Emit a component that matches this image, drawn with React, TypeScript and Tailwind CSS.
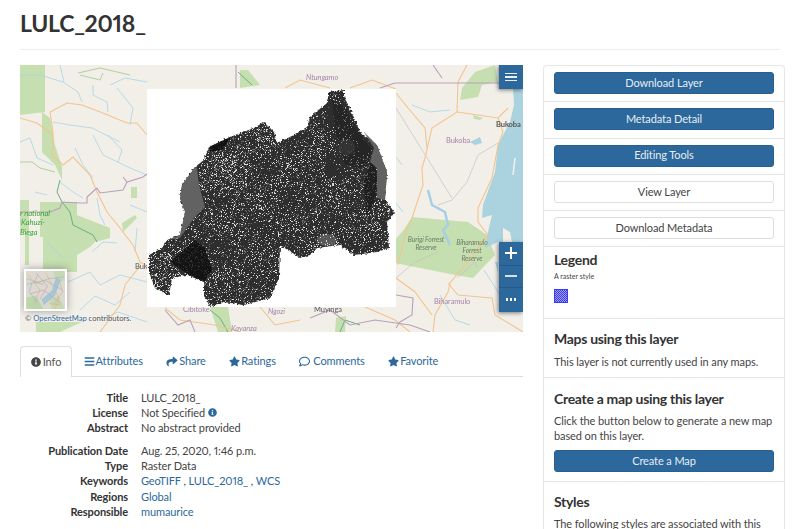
import { FaBars, FaInfoCircle, FaRegComment, FaShare, FaStar } from "react-icons/fa";

const outline =
  "344,90 329,92 327,103 310,117 307,127 294,135 277,143 274,132 264,122 254,128 230,137 209,147 204,160 195,167 182,185 180,198 185,212 180,235 167,240 162,248 149,255 149,272 155,288 169,295 172,278 187,275 204,282 204,295 210,307 224,302 244,305 270,298 279,278 280,245 300,258 310,255 317,248 340,245 354,255 377,252 389,248 387,222 395,213 385,200 387,172 377,145 360,132 350,108 344,97";

const land =
  "344,90 329,92 327,103 310,117 307,127 294,135 277,143 274,132 264,122 254,128 230,137 209,147 204,160 197,168 199,185 205,207 194,218 180,238 167,240 162,248 149,255 149,272 155,288 169,295 172,278 187,275 204,282 204,295 210,307 224,302 244,305 270,298 279,278 280,245 300,258 310,255 317,248 340,245 354,255 377,252 389,248 387,222 395,213 385,200 377,198 377,168 370,162 374,148 364,132 360,132 350,108 344,97";

// small deterministic generator so the speckle stays the same between runs
function buildSpeckle() {
  let seed = 20200825;
  const rand = () => {
    seed = (seed * 1664525 + 1013904223) >>> 0;
    return seed / 4294967296;
  };
  let light = "";
  let mid = "";
  for (let x = 147; x < 396; x++) {
    for (let y = 89; y < 307; y++) {
      let density = 0.2 + 0.07 * Math.sin(x / 11) * Math.cos(y / 9);
      if (Math.hypot(x - 225, y - 170) < 28) density += 0.1;
      if (Math.hypot(x - 160, y - 265) < 14) density += 0.1;
      if (x > 325 && y < 175) density -= 0.1;
      const r = rand();
      if (r < density * 0.4) light += `M${x} ${y}h1v1h-1z`;
      else if (r < density) mid += `M${x} ${y}h1v1h-1z`;
    }
  }
  return { light, mid };
}

const speckle = buildSpeckle();

const rivers = [
  "M20 75 L40 75 L63 82 L78 92 L82 102",
  "M93 85 L93 95 L107 102 L108 112",
  "M117 88 L133 108 L130 125",
  "M53 122 L70 125 L92 128 L120 142",
  "M93 135 L103 155 L130 168 L147 175",
  "M20 142 L30 138 L37 158 L53 165",
  "M75 148 L83 165 L93 178",
  "M60 182 L73 192 L83 198",
  "M97 198 L100 215 L105 225",
  "M35 192 L47 195",
  "M130 205 L147 212",
  "M137 228 L135 252",
  "M47 242 L63 258",
  "M92 252 L103 242 L117 243",
  "M110 85 L125 78 L147 82",
  "M60 65 L64 82",
  "M108 135 L122 150 L118 162",
  "M68 282 L90 272 L100 285 L120 275 L147 282",
  "M80 310 L95 296 L115 305 L130 292",
  "M100 320 L118 312 L147 322",
  "M396 157 L402 165",
  "M396 203 L403 212",
  "M412 105 L430 112 L450 110",
  "M484 270 L500 295 L510 300",
  "M440 295 L455 320 L470 325",
  "M508 268 L523 272",
];

const paleGreenLines = [
  "M78 73 L100 68 L130 75",
  "M80 75 L100 80 L103 73",
  "M20 162 L32 162 L40 168 L55 172",
];

const greenLines = [
  "M60 180 L57 192 L62 202 L70 212 L73 225 L93 235 L97 242",
  "M210 310 L220 318 L228 332",
  "M340 332 L345 320 L360 325",
  "M238 72 L252 85",
];

const roads = [
  "M50 112 L67 103 L82 105 L103 113 L127 123 L137 123 L147 135",
  "M50 112 L53 132 L53 148 L52 155 L63 165 L73 157 L90 175 L97 192 L107 212 L120 228 L133 245 L140 262 L147 266",
  "M20 118 L37 123 L53 135",
  "M140 266 L125 285 L120 305 L100 332",
  "M467 65 L458 82 L457 112 L432 128 L425 158 L422 168 L423 185 L412 218 L405 235 L398 265",
  "M396 93 L408 108 L425 128 L427 148",
  "M457 112 L478 115 L498 118 L508 108",
  "M498 118 L503 132 L498 145 L492 178 L478 208 L478 222 L488 235 L465 265 L450 283 L448 292 L435 315 L433 332",
  "M448 283 L458 295 L492 298 L495 315 L523 332",
  "M396 278 L415 292 L432 315",
  "M285 88 L300 80 L330 88",
  "M350 88 L372 80 L396 89",
  "M165 308 L180 320 L215 325 L240 332",
  "M260 307 L275 325 L300 320",
  "M365 307 L395 320 L410 332",
];

const greyLines = [
  "M396 108 L452 198",
  "M438 205 L452 200 L467 182 L478 155 L498 143",
  "M396 278 L415 262 L438 252",
  "M457 278 L475 262 L477 268",
];

const borders = [
  "M380 88 L395 83 L499 83",
  "M433 65 L442 78",
  "M236 65 L236 88",
  "M123 177 L127 182 L143 177 L147 174",
  "M97 188 L100 193 L123 190 L127 182",
  "M97 188 L87 197 L87 203 L80 203 L62 202 L60 208 L50 212 L20 212",
  "M165 310 L178 325 L190 320 L195 332",
  "M310 318 L330 310 L350 325 L375 320 L410 325 L430 332",
  "M396 295 L413 298 L412 315 L400 322 L396 328",
];

function MapBackground() {
  return (
    <svg viewBox="20 65 503 267" className="absolute inset-0 h-full w-full blur-[0.35px]">
      <rect x="20" y="65" width="503" height="267" fill="#f2efe9" />
      <g fill="#c5dfb0">
        <polygon points="20,65 45,65 45,112 20,115" />
        <polygon points="42,112 50,118 55,145 62,167 62,180 55,165 42,152" />
        <polygon points="20,200 29,200 29,265 25,265 25,232 20,232" />
        <polygon points="40,202 77,202 77,215 110,228 110,238 95,242 90,247 77,255 77,272 43,272 43,237 40,237" />
        <polygon points="122,223 135,215 137,218 123,232" />
        <polygon points="131,187 137,187 137,198 131,198" />
        <polygon points="412,217 468,222 487,235 495,255 473,278 455,275 395,263 395,240 405,228" />
        <polygon points="462,88 475,72 495,65 498,82 482,85 478,97 460,100" />
        <polygon points="473,115 483,118 480,120 474,119" />
        <polygon points="240,70 248,70 260,85 240,88" />
        <polygon points="36,322 82,322 60,332 36,332" />
        <polygon points="210,307 228,307 232,332 218,332" />
        <polygon points="336,318 346,316 345,332 335,332" />
      </g>
      <polygon
        points="513,88 514,105 510,122 502,137 498,145 495,172 483,205 482,218 492,215 488,232 485,248 498,242 523,242 523,88"
        fill="#aad3df"
      />
      <polygon points="503,228 510,232 512,242 503,242" fill="#f2efe9" />
      <path d="M515 158 L513 175" stroke="#f2efe9" strokeWidth="1.5" />
      <polygon points="470,142 480,137 482,143 475,145" fill="#aad3df" />
      <polygon points="495,262 498,262 498,272" fill="#aad3df" />
      <path d="M428 190 L432 205 L445 212 L448 225 L443 230 L450 245" fill="none" stroke="#a6cfe3" strokeWidth="2.5" />
      <g fill="none">
        {rivers.map((d) => (
          <path key={d} d={d} stroke="#a8d3e6" strokeWidth="0.8" />
        ))}
        {greyLines.map((d) => (
          <path key={d} d={d} stroke="#c8bebe" strokeWidth="0.7" />
        ))}
        {paleGreenLines.map((d) => (
          <path key={d} d={d} stroke="#a8cc98" strokeWidth="0.9" />
        ))}
        {greenLines.map((d) => (
          <path key={d} d={d} stroke="#6fae80" strokeWidth="1" />
        ))}
        {roads.map((d) => (
          <path key={d} d={d} stroke="#f4c48e" strokeWidth="1.1" />
        ))}
        {borders.map((d) => (
          <path key={d} d={d} stroke="#b9a0ba" strokeWidth="1.1" />
        ))}
      </g>
      <g fontFamily="Lato, sans-serif" fontSize="7.5">
        <text x="306" y="80" fill="#a687a8" fontStyle="italic">Ntungamo</text>
        <text x="496" y="127" fill="#555555" fontWeight="700">Bukoba</text>
        <text x="446" y="143" fill="#a884a8">Bukoba</text>
        <g fill="#6e7d66" fontStyle="italic" fontSize="6.8" textAnchor="middle">
          <text x="426" y="242">Burigi Forrest</text>
          <text x="426" y="250">Reserve</text>
          <text x="472" y="245">Biharamulo</text>
          <text x="472" y="253">Forrest</text>
          <text x="472" y="261">Reserve</text>
        </g>
        <g fill="#3fa33a" fontStyle="italic" fontSize="7.8">
          <text x="20" y="216">r national</text>
          <text x="21" y="225">Kahuzi-</text>
          <text x="20" y="235">Biega</text>
        </g>
        <text x="135" y="269" fill="#555555">Buk</text>
        <text x="434" y="304" fill="#a884a8">Biharamulo</text>
        <text x="183" y="312" fill="#a687a8">Cibitoke</text>
        <text x="268" y="314" fill="#a687a8" fontStyle="italic">Ngozi</text>
        <text x="314" y="312" fill="#555555">Muyinga</text>
        <text x="231" y="331" fill="#a687a8" fontStyle="italic">Kayanza</text>
      </g>
    </svg>
  );
}

function RasterOverlay() {
  return (
    <svg
      viewBox="147 89 249 218"
      className="absolute left-[127px] top-[24px] h-[218px] w-[249px] bg-white blur-[0.4px]"
    >
      <defs>
        <filter id="rough" x="-5%" y="-5%" width="110%" height="110%">
          <feTurbulence type="fractalNoise" baseFrequency="0.45" numOctaves="2" seed="3" result="t" />
          <feDisplacementMap in="SourceGraphic" in2="t" scale="4" xChannelSelector="R" yChannelSelector="G" />
        </filter>
        <clipPath id="land">
          <polygon points={land} />
        </clipPath>
      </defs>
      <polygon points={outline} fill="#2d2d2d" filter="url(#rough)" />
      <polygon points="195,167 182,185 180,198 185,212 180,235 167,240 180,238 194,218 205,207 199,185 197,168" fill="#626262" />
      <polygon points="364,132 377,145 387,172 385,200 377,198 377,168 370,162 374,148" fill="#626262" />
      <ellipse cx="347" cy="147" rx="8" ry="8" fill="#454545" />
      <ellipse cx="327" cy="240" rx="10" ry="6" fill="#585858" />
      <g clipPath="url(#land)">
        <path d={speckle.mid} fill="#6e6e6e" />
        <path d={speckle.light} fill="#d8d8d8" />
        <polygon points="170,262 195,240 205,248 212,270 204,282 185,272" fill="#0c0c0c" opacity="0.8" />
        <polygon points="209,147 224,138 232,136 222,150 210,152" fill="#0c0c0c" opacity="0.85" />
        <polygon points="372,160 378,175 375,200 366,215 364,180" fill="#161616" opacity="0.6" />
        <polygon points="332,100 346,108 355,128 372,150 366,170 345,165 335,130" fill="#1a1a1a" opacity="0.4" />
      </g>
    </svg>
  );
}

function Thumbnail() {
  return (
    <div className="absolute left-[4px] top-[204px] h-[42px] w-[43px] overflow-hidden border-2 border-white shadow-[0_0_8px_rgba(0,0,0,0.35)]">
      <svg viewBox="0 0 40 40" className="h-full w-full bg-[#dcd9d0] blur-[0.3px]">
        <polygon points="0,28 10,26 18,40 0,40" fill="#bcd6ac" />
        <polygon points="24,30 34,26 40,40 26,40" fill="#c6d8b0" />
        <polygon points="28,0 40,0 40,10 32,12" fill="#bcd6ac" opacity="0.7" />
        <polygon points="31,6 27,20 16,30 18,36 30,26 36,10" fill="#a6c6d6" />
        <g fill="none" strokeWidth="0.6">
          <path d="M2 4 L14 20 L8 36" stroke="#e2aa8e" />
          <path d="M10 2 L22 16 L14 30" stroke="#c49ab2" />
          <path d="M20 2 L34 28 L30 40" stroke="#e2aa8e" />
          <path d="M0 14 L20 10 L38 20" stroke="#8fb5cb" />
          <path d="M4 24 L18 20 L36 34" stroke="#c49ab2" />
          <path d="M0 8 L12 12 L24 8 L40 6" stroke="#a9b9a0" />
          <path d="M34 8 L38 22 L28 36" stroke="#d8a898" />
          <path d="M6 12 L3 22 L12 34" stroke="#8fb5cb" />
          <path d="M12 4 L8 12 L18 14" stroke="#d29a9a" />
          <path d="M24 34 L36 36" stroke="#e2aa8e" />
        </g>
      </svg>
    </div>
  );
}

function MapPanel() {
  return (
    <div className="relative h-[267px] w-full overflow-hidden">
      <MapBackground />
      <RasterOverlay />
      <Thumbnail />
      <p className="absolute left-[5px] top-[248px] text-[7.6px] leading-[10px] tracking-normal text-[#555] [text-shadow:0_0_3px_#fff]">
        © <span className="text-[#2c689c]">OpenStreetMap</span> contributors.
      </p>
      <button className="absolute right-0 top-0 flex h-6 w-6 items-center justify-center bg-[#2c689c] shadow-[-1px_1px_4px_rgba(0,0,0,0.5)]">
        <span className="flex w-3 flex-col gap-[2.3px]">
          <span className="h-[1.3px] bg-white/90" />
          <span className="h-[1.3px] bg-white/90" />
          <span className="h-[1.3px] bg-white/90" />
        </span>
      </button>
      <div className="absolute right-0 top-[176.5px] flex w-6 flex-col divide-y divide-[#25598a] bg-[#2c689c] shadow-[-1px_1px_4px_rgba(0,0,0,0.5)]">
        <span className="flex h-6 items-center justify-center">
          <svg viewBox="0 0 12 12" className="h-3 w-3 stroke-white" strokeWidth="2">
            <path d="M0 6H12M6 0V12" />
          </svg>
        </span>
        <span className="flex h-[22px] items-center justify-center">
          <svg viewBox="0 0 12 12" className="h-3 w-3 stroke-white/90" strokeWidth="1.8">
            <path d="M0 6H12" />
          </svg>
        </span>
        <span className="flex h-6 items-center justify-center gap-[1.5px]">
          <span className="h-[2.5px] w-[2.5px] bg-white" />
          <span className="h-[2.5px] w-[2.5px] bg-white" />
          <span className="h-[2.5px] w-[2.5px] bg-white" />
        </span>
      </div>
    </div>
  );
}

const tabs = [
  { label: "Attributes", icon: <FaBars className="h-[11px] w-[11px]" />, gap: "gap-[1px]", width: "w-[82.5px]" },
  { label: "Share", icon: <FaShare className="h-[11px] w-[12px]" />, gap: "gap-[1px]", width: "w-[63px]" },
  { label: "Ratings", icon: <FaStar className="h-[11px] w-[11px]" />, gap: "gap-[1px]", width: "w-[70px]" },
  { label: "Comments", icon: <FaRegComment className="h-[11px] w-[11px]" />, gap: "gap-[3px]", width: "w-[89px]" },
  { label: "Favorite", icon: <FaStar className="h-[11px] w-[11px]" />, gap: "gap-[1px]", width: "w-[73.5px]" },
];

function Tabs() {
  return (
    <div className="flex h-[31px] border-b border-[#ddd]">
      <div className="z-10 -mb-px flex h-[31px] w-[52px] items-center justify-center gap-[2px] rounded-t border border-b-0 border-[#ddd] bg-white text-[#555]">
        <FaInfoCircle className="h-[10px] w-[10px] text-[#444]" />
        Info
      </div>
      {tabs.map((t) => (
        <div key={t.label} className={`flex items-center justify-center ${t.gap} ${t.width} text-[#2c689c]`}>
          {t.icon}
          {t.label}
        </div>
      ))}
    </div>
  );
}

function Row({ label, className, children }: { label: string; className?: string; children: React.ReactNode }) {
  return (
    <div className={`flex h-[15.3px] items-center leading-[15.3px] ${className ?? ""}`}>
      <dt className="w-[108px] shrink-0 text-right font-bold text-[#333]">{label}</dt>
      <dd className="ml-[13px] text-[#444]">{children}</dd>
    </div>
  );
}

function Details() {
  return (
    <dl className="mt-[12.5px]">
      <Row label="Title">LULC_2018_</Row>
      <Row label="License">
        <span className="flex items-center gap-[3px]">
          Not Specified <FaInfoCircle className="h-[9px] w-[9px] text-[#2c689c]" />
        </span>
      </Row>
      <Row label="Abstract">No abstract provided</Row>
      <Row label="Publication Date" className="mt-[7.5px]">Aug. 25, 2020, 1:46 p.m.</Row>
      <Row label="Type">Raster Data</Row>
      <Row label="Keywords">
        <span className="text-[#2c689c]">GeoTIFF</span> , <span className="text-[#2c689c]">LULC_2018_</span> ,{" "}
        <span className="text-[#2c689c]">WCS</span>
      </Row>
      <Row label="Regions"><span className="text-[#2c689c]">Global</span></Row>
      <Row label="Responsible"><span className="text-[#2c689c]">mumaurice</span></Row>
    </dl>
  );
}

function ActionButton({ label, primary }: { label: string; primary?: boolean }) {
  return (
    <div
      className={`flex h-[22px] items-center justify-center rounded-[3px] border ${
        primary ? "border-[#285f8f] bg-[#2c689c] text-[#e6edf3]" : "border-[#ddd] bg-white text-[#444]"
      }`}
    >
      {label}
    </div>
  );
}

function Sidebar() {
  return (
    <aside className="w-[242px] shrink-0 rounded-t border border-b-0 border-[#e7e7e7]">
      <div className="flex flex-col divide-y divide-[#e7e7e7]">
        {["Download Layer", "Metadata Detail", "Editing Tools"].map((label) => (
          <div key={label} className="h-[36.3px] px-[10px] pt-[6px]">
            <ActionButton label={label} primary />
          </div>
        ))}
        {["View Layer", "Download Metadata"].map((label) => (
          <div key={label} className="h-[36.3px] px-[10px] pt-[6px]">
            <ActionButton label={label} />
          </div>
        ))}
        <div className="h-[71.5px] px-[10px] pt-[3px]">
          <h2 className="text-[14px] font-bold leading-[20px] tracking-[-0.3px] text-[#333]">Legend</h2>
          <p className="mt-px text-[7px] leading-[10px] tracking-normal text-[#444]">A raster style</p>
          <div className="mt-[8px] h-[14px] w-[14px] border border-[#3b3bff] bg-[repeating-conic-gradient(#3a3af0_0_25%,#a0a0f0_0_50%)] bg-[length:2px_2px]" />
        </div>
        <div className="h-[59px] px-[10px] pt-[10.5px]">
          <h2 className="text-[14px] font-bold leading-[20px] tracking-[-0.3px] text-[#333]">Maps using this layer</h2>
          <p className="mt-[4.5px] leading-[15.4px] text-[#444]">This layer is not currently used in any maps.</p>
        </div>
        <div className="h-[104px] px-[10px] pt-[11px]">
          <h2 className="text-[14px] font-bold leading-[20px] tracking-[-0.3px] text-[#333]">Create a map using this layer</h2>
          <p className="mt-[4px] leading-[15px] text-[#444]">Click the button below to generate a new map based on this layer.</p>
          <div className="mt-[7px]">
            <ActionButton label="Create a Map" primary />
          </div>
        </div>
        <div className="px-[10px] pt-[10.5px]">
          <h2 className="text-[14px] font-bold leading-[20px] tracking-[-0.3px] text-[#333]">Styles</h2>
          <p className="mt-[4px] leading-[15px] text-[#444]">The following styles are associated with this layer.</p>
        </div>
      </div>
    </aside>
  );
}

export default function App() {
  return (
    <div className="h-[529px] overflow-hidden bg-white px-[20px] font-['Lato',sans-serif] text-[11px] tracking-[-0.1px] text-[#333] proportional-nums">
      <h1 className="h-[50px] border-b border-[#eee] pt-[8px] text-[23px] font-bold leading-[30px] tracking-[-0.25px] text-[#333]">LULC_2018_</h1>
      <div className="mt-[15px] flex gap-[20px]">
        <main className="w-[503px] shrink-0">
          <MapPanel />
          <div className="mt-[14px]">
            <Tabs />
            <Details />
          </div>
        </main>
        <Sidebar />
      </div>
    </div>
  );
}
